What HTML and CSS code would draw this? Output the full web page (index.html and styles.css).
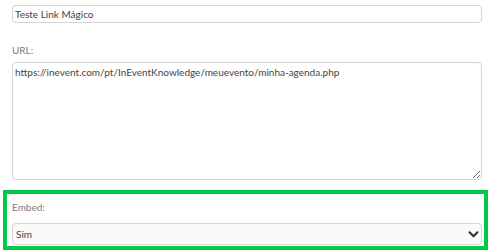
FILE: index.html
```html
<!DOCTYPE html>
<html lang="en">
<head>
  <meta charset="UTF-8" />
  <meta name="viewport" content="width=device-width, initial-scale=1.0" />
  <title>Link Mágico</title>
  <link rel="stylesheet" href="styles.css">
</head>
<body>
  <div class="form">
    <div class="field">
      <input class="control" type="text" value="Teste Link Mágico" />
    </div>

    <div class="field">
      <label class="label">URL:</label>
      <textarea class="control area">https://inevent.com/pt/InEventKnowledge/meuevento/minha-agenda.php</textarea>
    </div>

    <div class="field highlight">
      <label class="label">Embed:</label>
      <div class="select-wrap">
        <select class="control select">
          <option>Sim</option>
          <option>Não</option>
        </select>
        <svg class="chevron" viewBox="0 0 12 8" width="11" height="7">
          <path d="M1.5 1.5 L6 6 L10.5 1.5" fill="none" stroke="#333" stroke-width="2.4" stroke-linecap="round" stroke-linejoin="round"/>
        </svg>
      </div>
    </div>
  </div>
</body>
</html>
```

FILE: styles.css
```css
* {
  margin: 0;
  padding: 0;
  box-sizing: border-box;
}
body {
  background: #fff;
  font-family: Lato, "Open Sans", sans-serif;
  font-size: 10px;
  color: #444;
  overflow: hidden;
}
.form {
  display: flex;
  flex-direction: column;
  padding: 5px 0 0 3px;
}
.field {
  padding: 0 0 0 9px;
}
.field + .field {
  margin-top: 21px;
}
.label {
  display: block;
  color: #7a7a7a;
  font-size: 10px;
  line-height: 12px;
  margin-bottom: 6px;
}
.control {
  display: block;
  width: 470px;
  height: 18px;
  border: 1px solid #d5d5d5;
  border-radius: 4px;
  background: #fff;
  font-family: inherit;
  font-size: 10px;
  color: #444;
  padding: 0 2px;
  outline: none;
}
.area {
  height: 118px;
  padding: 3px 2px;
  resize: vertical;
  line-height: 12px;
}
.highlight {
  border: 4px solid #00c84a;
  width: 485px;
  padding: 7px 0 1px 5px;
  margin-top: 10px !important;
}
.highlight .label {
  margin-bottom: 10px;
}
.select-wrap {
  position: relative;
  width: 470px;
}
.select {
  appearance: none;
  -webkit-appearance: none;
  height: 22px;
  background: #fafafa;
  padding: 0 3px;
}
.chevron {
  position: absolute;
  right: 3px;
  top: 8px;
  pointer-events: none;
}
```
